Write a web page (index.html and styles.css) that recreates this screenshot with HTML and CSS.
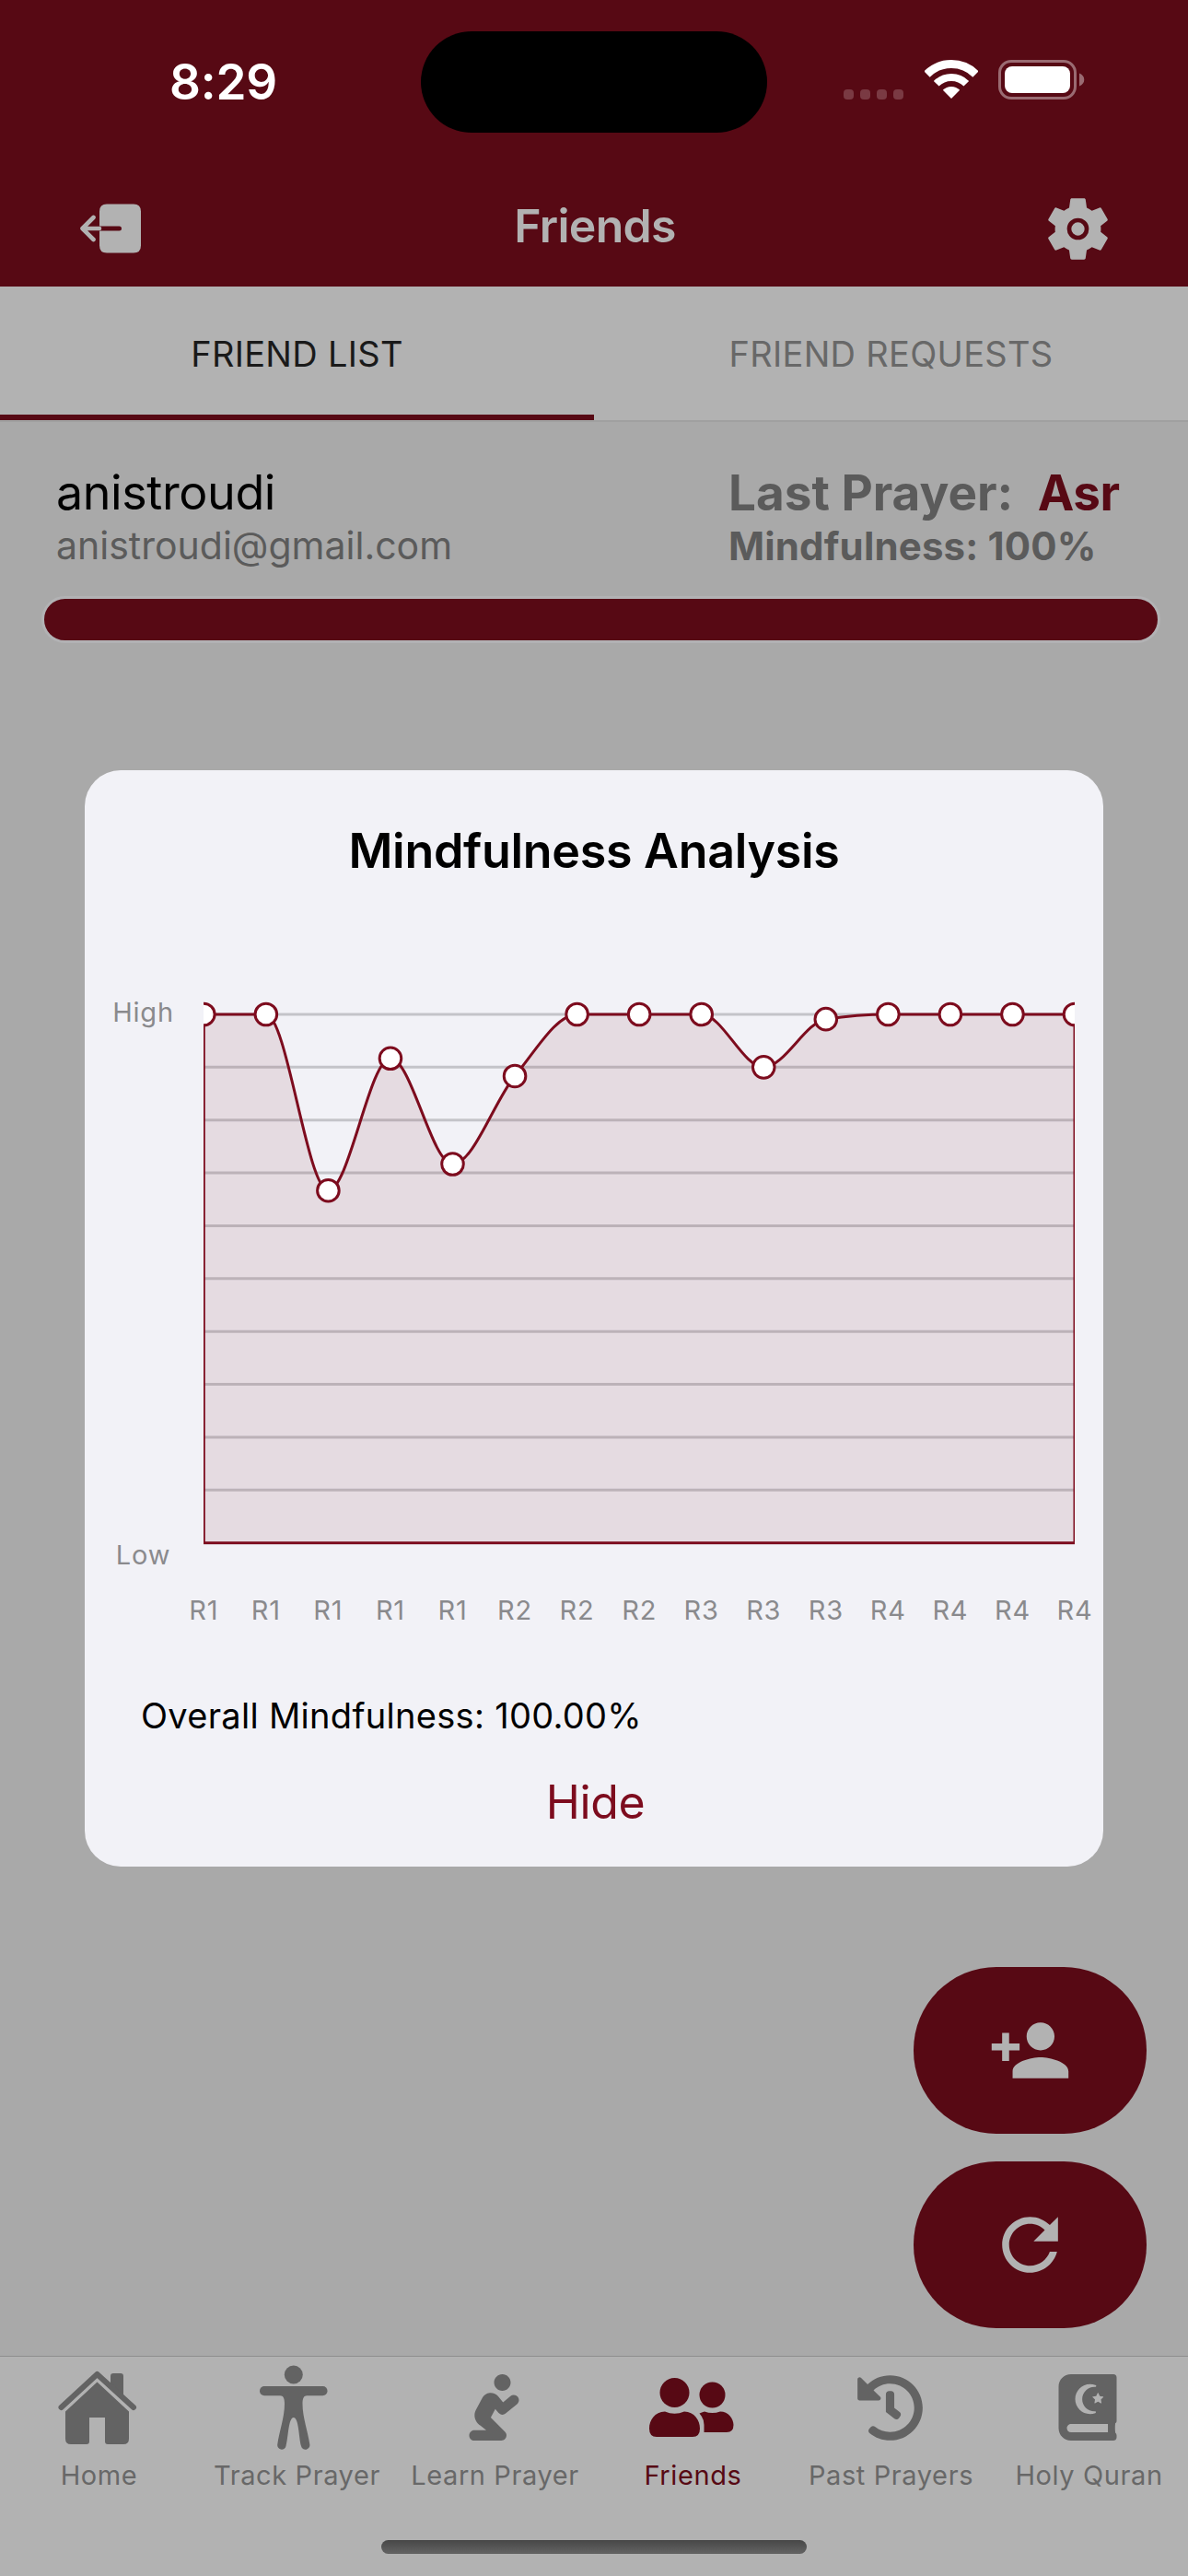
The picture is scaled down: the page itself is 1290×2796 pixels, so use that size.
FILE: index.html
```html
<!DOCTYPE html>
<html lang="en">
<head>
    <meta charset="UTF-8">
    <meta name="viewport" content="width=device-width, initial-scale=1.0">
    <title>Friends</title>
    <link rel="stylesheet" href="styles.css">
</head>
<body>
    <div class="screen">
        <div class="status-bar">
            <div class="time">8:29</div>
            <div class="island"></div>
            <div class="status-icons">
                <div class="cellular"><i></i><i></i><i></i><i></i></div>
                <svg class="wifi" width="58" height="42" viewBox="0 0 58 42">
                    <path d="M2.5 15.5A37.5 37.5 0 0 1 55.5 15.5" fill="none" stroke="#fff" stroke-width="9"/>
                    <path d="M12.7 25.7A23 23 0 0 1 45.3 25.7" fill="none" stroke="#fff" stroke-width="8"/>
                    <path d="M29 42L19.8 32.8A13 13 0 0 1 38.2 32.8Z" fill="#fff"/>
                </svg>
                <svg class="battery" width="95" height="43" viewBox="0 0 95 43">
                    <rect x="1.5" y="1.5" width="82" height="40" rx="12.5" fill="none" stroke="#9a6b72" stroke-width="3"/>
                    <rect x="7" y="7" width="71" height="29" rx="8" fill="#fff"/>
                    <path d="M88 14.5C95 17 95 26 88 28.5Z" fill="#9a6b72"/>
                </svg>
            </div>
        </div>

        <div class="header">
            <svg class="header-icon" width="68" height="54" viewBox="0 0 68 54">
                <path fill="#b2b2b2" d="M29 0.5H58Q66 0.5 66 8.5V45.5Q66 53.5 58 53.5H29Q21 53.5 21 45.5V29.5H42.5A2.5 2.5 0 0 0 42.5 24.5H21V8.5Q21 0.5 29 0.5Z"/>
                <path d="M21 27H3M14.5 15L2.5 27L14.5 39" fill="none" stroke="#b2b2b2" stroke-width="4.6" stroke-linecap="round" stroke-linejoin="round"/>
            </svg>
            <div class="title">Friends</div>
            <svg class="header-icon" width="83" height="83" viewBox="0 0 24 24">
                <path fill="#b2b2b2" d="M19.14 12.94c.04-.3.06-.61.06-.94 0-.32-.02-.64-.07-.94l2.03-1.58c.18-.14.23-.41.12-.61l-1.92-3.32c-.12-.22-.37-.29-.59-.22l-2.39.96c-.5-.38-1.03-.7-1.62-.94l-.36-2.54c-.04-.24-.24-.41-.48-.41h-3.84c-.24 0-.43.17-.47.41l-.36 2.54c-.59.24-1.13.57-1.62.94l-2.39-.96c-.22-.08-.47 0-.59.22L2.74 8.87c-.12.21-.08.47.12.61l2.03 1.58c-.05.3-.09.63-.09.94s.02.64.07.94l-2.03 1.58c-.18.14-.23.41-.12.61l1.92 3.32c.12.22.37.29.59.22l2.39-.96c.5.38 1.03.7 1.62.94l.36 2.54c.05.24.24.41.48.41h3.84c.24 0 .44-.17.47-.41l.36-2.54c.59-.24 1.13-.56 1.62-.94l2.39.96c.22.08.47 0 .59-.22l1.92-3.32c.12-.22.07-.47-.12-.61l-2.01-1.58z"/>
                <circle cx="12" cy="12" r="2.75" fill="none" stroke="#570914" stroke-width="1.35"/>
            </svg>
        </div>

        <div class="tabs">
            <div class="tab active">FRIEND LIST</div>
            <div class="tab">FRIEND REQUESTS</div>
        </div>

        <div class="content">
            <div class="friend">
                <div>
                    <div class="name">anistroudi</div>
                    <div class="email">anistroudi@gmail.com</div>
                </div>
                <div>
                    <div class="prayer">Last Prayer: <span>Asr</span></div>
                    <div class="mindfulness">Mindfulness: 100%</div>
                </div>
            </div>
            <div class="progress"></div>

            <div class="fabs">
                <div class="fab">
                    <svg width="91" height="91" viewBox="0 0 24 24" fill="#b2b2b2">
                        <path d="M15 12c2.21 0 4-1.79 4-4s-1.79-4-4-4-4 1.79-4 4 1.79 4 4 4zm-9-2V7H4v3H1v2h3v3h2v-3h3v-2H6zm9 4c-2.67 0-8 1.34-8 4v2h16v-2c0-2.66-5.33-4-8-4z"/>
                    </svg>
                </div>
                <div class="fab">
                    <svg width="91" height="91" viewBox="0 0 24 24" fill="#b2b2b2">
                        <path d="M17.65 6.35C16.2 4.9 14.21 4 12 4c-4.42 0-7.99 3.58-7.99 8s3.57 8 7.99 8c3.73 0 6.84-2.55 7.73-6h-2.08c-.82 2.33-3.04 4-5.65 4-3.31 0-6-2.69-6-6s2.69-6 6-6c1.66 0 3.14.69 4.22 1.78L13 11h7V4l-2.35 2.35z"/>
                    </svg>
                </div>
            </div>
        </div>

        <div class="tab-bar">
            <div class="nav">
                <div class="nav-item">
                    <div class="nav-icon">
                        <svg width="86" height="80" viewBox="0 0 86 80" fill="#636363">
                            <path d="M57 14V6Q57 3 60 3H68Q71 3 71 6V29L57 16Z"/>
                            <path d="M3.5 40L42.5 4L82 40" fill="none" stroke="#636363" stroke-width="6" stroke-linecap="round" stroke-linejoin="round"/>
                            <path d="M42.5 12.5L77 44.5V74Q77 80 71 80H54Q51 80 51 77V51H34V77Q34 80 31 80H14Q8 80 8 74V44.5Z"/>
                        </svg>
                    </div>
                    <div class="nav-label">Home</div>
                </div>
                <div class="nav-item">
                    <div class="nav-icon track">
                        <svg width="74" height="92" viewBox="0 0 74 92" fill="#636363">
                            <circle cx="36.8" cy="10.5" r="10"/>
                            <rect x="0" y="23" width="73.5" height="10.3" rx="5"/>
                            <path d="M22 33C26 33 27 37 27 42C27 57 21 73 19.3 86A4.7 4.7 0 0 0 28.5 88C31 80 31 57 36.8 57S42.5 80 45 88A4.7 4.7 0 0 0 54.3 86C52.6 73 46.5 57 46.5 42C46.5 37 47.5 33 51.5 33Z"/>
                        </svg>
                    </div>
                    <div class="nav-label">Track Prayer</div>
                </div>
                <div class="nav-item">
                    <div class="nav-icon">
                        <svg width="55" height="72" viewBox="0 0 384 512" fill="#636363">
                            <path d="M256 128c35.35 0 64-28.65 64-64S291.35 0 256 0s-64 28.65-64 64 28.65 64 64 64zm-30.63 169.75c14.06 16.72 39 19.09 55.97 5.22l88-72.02c17.09-13.98 19.59-39.19 5.62-56.28-13.97-17.11-39.19-19.59-56.31-5.62l-57.44 47-38.91-46.31c-15.44-18.39-39.22-27.92-64-25.33-24.19 2.48-45.25 16.27-56.37 36.92l-49.37 92.03c-23.4 43.64-8.69 96.37 34.19 123.75L131.56 432H40c-22.09 0-40 17.91-40 40s17.91 40 40 40h208c34.08 0 53.77-42.79 28.28-68.28L166.42 333.86l34.8-64.87 24.15 28.76z"/>
                        </svg>
                    </div>
                    <div class="nav-label">Learn Prayer</div>
                </div>
                <div class="nav-item active">
                    <div class="nav-icon">
                        <svg width="92" height="64" viewBox="0 0 92 64" fill="#570914">
                            <circle cx="27.5" cy="16" r="16"/>
                            <path d="M17 36.5Q27.5 41 38 36.5C49 36.5 55 46 55 55Q55 64 47 64H8Q0 64 0 55C0 46 6 36.5 17 36.5Z"/>
                            <circle cx="68.500" cy="18.5" r="14"/>
                            <path d="M54.5 38.5L60 36.5Q68.5 39.5 77 36.5C86 36.5 91.5 44.5 91.5 51Q91.5 59 84 59H59.5V51Q59.5 44 54.5 38.5Z"/>
                        </svg>
                    </div>
                    <div class="nav-label">Friends</div>
                </div>
                <div class="nav-item">
                    <div class="nav-icon">
                        <svg width="73" height="73" viewBox="0 0 512 512" fill="#636363">
                            <path d="M504 255.531c.253 136.64-111.18 248.372-247.82 248.468-59.015.042-113.223-20.53-155.822-54.911-11.077-8.94-11.905-25.541-1.839-35.607l11.267-11.267c8.609-8.609 22.353-9.551 31.891-1.984C173.062 425.135 212.781 440 256 440c101.705 0 184-82.311 184-184 0-101.705-82.311-184-184-184-48.814 0-93.149 18.969-126.068 49.932l50.754 50.754c10.08 10.08 2.941 27.314-11.313 27.314H24c-8.837 0-16-7.163-16-16V38.627c0-14.254 17.234-21.393 27.314-11.314l49.372 49.372C129.209 34.136 189.552 8 256 8c136.81 0 247.747 110.78 248 247.531zm-180.912 78.784l9.823-12.63c8.138-10.463 6.253-25.542-4.21-33.679L288 256.349V152c0-13.255-10.745-24-24-24h-16c-13.255 0-24 10.745-24 24v135.651l65.409 50.874c10.463 8.137 25.541 6.253 33.679-4.21z"/>
                        </svg>
                    </div>
                    <div class="nav-label">Past Prayers</div>
                </div>
                <div class="nav-item">
                    <div class="nav-icon">
                        <svg width="64" height="72" viewBox="0 0 448 512" fill="#636363">
                            <path d="M448 358.4V25.6c0-16-9.6-25.6-25.6-25.6H96C41.6 0 0 41.6 0 96v320c0 54.4 41.6 96 96 96h326.4c12.8 0 25.6-9.6 25.6-25.6v-16c0-6.4-3.2-12.8-9.6-19.2-3.2-16-3.2-60.8 0-73.6 6.4-3.2 9.6-9.6 9.6-19.2zM301.08 145.82c.6-1.21 1.76-1.82 2.92-1.82s2.32.61 2.92 1.82l11.18 22.65 25 3.63c2.67.39 3.74 3.67 1.81 5.56l-18.09 17.63 4.27 24.89c.36 2.11-1.31 3.82-3.21 3.82-.5 0-1.02-.12-1.52-.38L304 211.87l-22.36 11.75c-.5.26-1.02.38-1.52.38-1.9 0-3.57-1.71-3.21-3.82l4.27-24.89-18.09-17.63c-1.94-1.89-.87-5.17 1.81-5.56l24.99-3.63 11.19-22.65zm-57.89-69.01c13.67 0 27.26 2.49 40.38 7.41a6.775 6.775 0 1 1-2.38 13.12c-.67 0-3.09-.21-4.13-.21-52.31 0-94.86 42.55-94.86 94.86 0 52.3 42.55 94.86 94.86 94.86 1.03 0 3.48-.21 4.13-.21 3.93 0 6.8 3.14 6.8 6.78 0 2.98-1.94 5.51-4.62 6.42-13.07 4.87-26.59 7.34-40.19 7.34C179.67 307.19 128 255.51 128 192c0-63.52 51.67-115.19 115.19-115.19zM380.8 448H96c-19.2 0-32-12.8-32-32s16-32 32-32h284.8v64z"/>
                        </svg>
                    </div>
                    <div class="nav-label">Holy Quran</div>
                </div>
            </div>
            <div class="home-indicator"></div>
        </div>

        <div class="overlay">
            <div class="modal">
                <div class="modal-title">Mindfulness Analysis</div>
                <svg id="chart" width="1106" height="836" viewBox="0 0 1106 836">
                    <clipPath id="plot"><rect x="129" y="120" width="946" height="600.5"/></clipPath>
                </svg>
                <div class="overall">Overall Mindfulness: 100.00%</div>
                <div class="hide">Hide</div>
            </div>
        </div>
    </div>

    <script>
        const values = [100, 100, 66.67, 91.67, 71.67, 88.33, 100, 100, 100, 90, 99.1, 100, 100, 100, 100];
        const labels = ['R1', 'R1', 'R1', 'R1', 'R1', 'R2', 'R2', 'R2', 'R3', 'R3', 'R3', 'R4', 'R4', 'R4', 'R4'];
        const plot = { left: 129.3, right: 1075, top: 145, bottom: 718.7 };
        const step = (plot.right - plot.left) / (values.length - 1);
        const chart = document.getElementById('chart');

        const points = values.map((v, i) => [
            plot.left + i * step,
            plot.bottom - (plot.bottom - plot.top) * v / 100
        ]);

        function add(tag, attrs, text) {
            const el = document.createElementNS('http://www.w3.org/2000/svg', tag);
            for (const key in attrs) el.setAttribute(key, attrs[key]);
            if (text) el.textContent = text;
            chart.appendChild(el);
        }

        // tangent of a monotone curve, flat on every peak and dip
        function slope(i) {
            if (i === 0 || i === points.length - 1) return 0;
            const a = (points[i][1] - points[i - 1][1]) / step;
            const b = (points[i + 1][1] - points[i][1]) / step;
            if (a * b <= 0) return 0;
            return Math.sign(a) * 2 * Math.min(Math.abs(a), Math.abs(b), Math.abs(a + b) / 4);
        }

        let line = `M${points[0]}`;
        for (let i = 1; i < points.length; i++) {
            const [x0, y0] = points[i - 1];
            const [x1, y1] = points[i];
            const d = step / 3;
            line += `C${x0 + d},${y0 + slope(i - 1) * d} ${x1 - d},${y1 - slope(i) * d} ${x1},${y1}`;
        }

        for (let i = 0; i <= 10; i++) {
            const y = plot.top + (plot.bottom - plot.top) * i / 10;
            add('line', { x1: plot.left, x2: plot.right, y1: y, y2: y, class: 'grid' });
        }
        add('path', { d: `${line}V${plot.bottom}H${plot.left}Z`, class: 'area', 'clip-path': 'url(#plot)' });
        points.forEach(([x, y]) => add('circle', { cx: x, cy: y, r: 11.8, class: 'dot', 'clip-path': 'url(#plot)' }));

        add('text', { x: 63.5, y: 153, class: 'axis' }, 'High');
        add('text', { x: 63.5, y: 742, class: 'axis' }, 'Low');
        labels.forEach((label, i) => add('text', { x: points[i][0], y: 802.3, class: 'axis' }, label));
    </script>
</body>
</html>
```
FILE: styles.css
```css
body {
    margin: 0;
    font-family: Inter, Roboto, sans-serif;
    background-color: #a9a9a9;
}
svg {
    display: block;
    flex-shrink: 0;
}
.screen {
    position: relative;
    display: flex;
    flex-direction: column;
    width: 1290px;
    height: 2796px;
    overflow: hidden;
    white-space: nowrap;
}
.status-bar {
    display: grid;
    grid-template-columns: 457px 376px 1fr;
    align-items: center;
    height: 178px;
    background-color: #570914;
}
.time {
    padding-left: 184px;
    color: #fff;
    font-size: 53px;
    font-weight: 600;
    line-height: 64px;
    letter-spacing: -0.2px;
}
.island {
    height: 110px;
    border-radius: 55px;
    background-color: #000;
}
.status-icons {
    display: flex;
    align-items: flex-end;
    gap: 23px;
    padding-left: 83px;
    padding-bottom: 5px;
}
.cellular {
    display: flex;
    gap: 7px;
}
.cellular i {
    width: 11px;
    height: 11px;
    border-radius: 4px;
    background-color: #7a3a43;
}
.wifi {
    margin-bottom: 1px;
    margin-right: -1px;
}
.header {
    display: flex;
    align-items: center;
    justify-content: space-between;
    height: 133px;
    padding: 0 78px 0 87px;
    background-color: #570914;
}
.header-icon {
    margin-top: 7px;
}
.title {
    padding-left: 8px;
    color: #b2b2b2;
    font-size: 50px;
    font-weight: 600;
    letter-spacing: -0.7px;
}
.tabs {
    display: flex;
    height: 145px;
    background-color: #b2b2b2;
    border-bottom: 2px solid #a0a0a0;
}
.tab {
    flex: 1;
    display: flex;
    align-items: center;
    justify-content: center;
    color: #686868;
    font-size: 38px;
    letter-spacing: 0.3px;
}
.tab.active {
    color: #1a1a1a;
    box-shadow: inset 0 -6px #570914;
}
.content {
    flex: 1;
    display: flex;
    flex-direction: column;
    padding: 45px 30px 30px 45px;
    background-color: #a9a9a9;
}
.friend {
    display: grid;
    grid-template-columns: 730px 1fr;
    padding-left: 16px;
    color: #5b5b5b;
}
.name {
    color: #000;
    font-size: 52px;
    line-height: 64px;
    letter-spacing: -0.4px;
}
.email {
    font-size: 41px;
    line-height: 51px;
}
.prayer {
    font-size: 53px;
    font-weight: 700;
    line-height: 64px;
}
.prayer span {
    margin-left: 14px;
    color: #570914;
    letter-spacing: -0.5px;
}
.mindfulness {
    font-size: 42px;
    font-weight: 700;
    line-height: 51px;
    letter-spacing: 0.15px;
}
.progress {
    height: 45px;
    margin-top: 29px;
    border: 3px solid #b2b2b4;
    border-radius: 26px;
    background-color: #570914;
}
.fabs {
    display: flex;
    flex-direction: column;
    gap: 30px;
    align-self: flex-end;
    margin-top: auto;
    margin-right: 15px;
}
.fab {
    display: flex;
    align-items: center;
    justify-content: center;
    width: 253px;
    height: 181px;
    border-radius: 90px;
    background-color: #570914;
}
.tab-bar {
    height: 238px;
    border-top: 1px solid #8e8e8e;
    background-color: #b2b2b2;
}
.nav {
    display: flex;
}
.nav-item {
    flex: 1 1 0;
    min-width: 0;
    display: flex;
    flex-direction: column;
    align-items: center;
    color: #686868;
}
.nav-item.active {
    color: #570914;
}
.nav-icon {
    display: flex;
    align-items: center;
    height: 110px;
    margin-right: 3px;
}
.nav-icon.track {
    margin-right: 7px;
}
.nav-label {
    margin-top: 1px;
    font-size: 29px;
    line-height: 36px;
    letter-spacing: 0.6px;
}
.home-indicator {
    width: 462px;
    height: 15px;
    margin: 52px auto 0;
    border-radius: 8px;
    background: linear-gradient(#474747, #646464);
}
.overlay {
    position: absolute;
    inset: 66px 0 0 0;
    display: flex;
    align-items: center;
    justify-content: center;
}
.modal {
    display: flex;
    flex-direction: column;
    width: 1106px;
    height: 1190px;
    border-radius: 39px;
    background-color: #f2f2f7;
}
.modal-title {
    padding-top: 56px;
    font-size: 52px;
    font-weight: 600;
    line-height: 64px;
    letter-spacing: -0.3px;
    text-align: center;
}
.grid {
    stroke: #c4c4c9;
    stroke-width: 3;
}
.area {
    fill: rgba(115, 22, 36, 0.1);
    stroke: #7d0c1e;
    stroke-width: 3;
}
.dot {
    fill: #fff;
    stroke: #7d0c1e;
    stroke-width: 3;
}
.axis {
    fill: #8a8a8d;
    font-size: 29px;
    letter-spacing: 0.8px;
    text-anchor: middle;
}
.overall {
    margin-top: 45px;
    padding-left: 61px;
    font-size: 38px;
    line-height: 50px;
    letter-spacing: 0.3px;
}
.hide {
    margin-top: 39px;
    padding-left: 3px;
    color: #7d0c1e;
    font-size: 50px;
    line-height: 60px;
    letter-spacing: -0.4px;
    text-align: center;
}
```
